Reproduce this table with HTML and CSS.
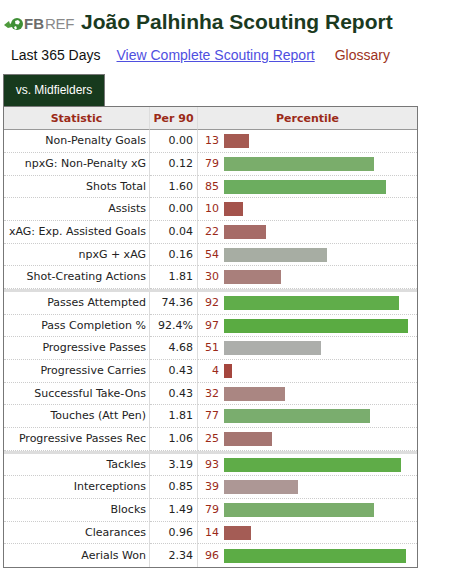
FILE: index.html
```html
<!DOCTYPE html>
<html lang="pt">
<head>
    <meta charset="UTF-8">
    <meta name="viewport" content="width=device-width, initial-scale=1.0">
    <title>João Palhinha Scouting Report</title>
    <link rel="stylesheet" href="styles.css">
</head>
<body>
    <div class="page-header">
        <div class="logo">
            <svg class="logo-mark" width="20" height="16" viewBox="0 0 20 16">
                <path d="M1 9 L6 5 L7 8 L10 6 L9 11 L5 12 Z" fill="#4e9a3c"/>
                <circle cx="14" cy="8" r="6" fill="#3f8f35"/>
                <path d="M12 5 L15 4 L17 6 L15.5 8.5 L12.5 8 Z" fill="#ffffff"/>
                <path d="M11 11 L13 10 L14 12.5 L12 13.5 Z" fill="#ffffff"/>
            </svg>
            <span class="logo-fb">FB</span><span class="logo-ref">REF</span>
        </div>
        <h1>João Palhinha Scouting Report</h1>
    </div>

    <div class="meta">
        <span class="period">Last 365 Days</span>
        <a class="full-link" href="#">View Complete Scouting Report</a>
        <span class="glossary">Glossary</span>
    </div>

    <div class="tabs">
        <div class="tab active">vs. Midfielders</div>
    </div>

    <table class="scout-table">
        <colgroup>
            <col class="col-stat">
            <col class="col-per90">
            <col>
        </colgroup>
        <thead>
            <tr>
                <th>Statistic</th>
                <th>Per 90</th>
                <th>Percentile</th>
            </tr>
        </thead>
        <tbody id="scoutRows"></tbody>
    </table>

    <script>
        // [statistic, per 90, percentile, bar colour]
        const groups = [
            [
                ['Non-Penalty Goals', '0.00', 13, '#a55a52'],
                ['npxG: Non-Penalty xG', '0.12', 79, '#7aad6b'],
                ['Shots Total', '1.60', 85, '#6cad5f'],
                ['Assists', '0.00', 10, '#a4534c'],
                ['xAG: Exp. Assisted Goals', '0.04', 22, '#a66b67'],
                ['npxG + xAG', '0.16', 54, '#a7ada3'],
                ['Shot-Creating Actions', '1.81', 30, '#a97f7b']
            ],
            [
                ['Passes Attempted', '74.36', 92, '#60ad4a'],
                ['Pass Completion %', '92.4%', 97, '#5aab42'],
                ['Progressive Passes', '4.68', 51, '#acaeab'],
                ['Progressive Carries', '0.43', 4, '#a5463e'],
                ['Successful Take-Ons', '0.43', 32, '#aa8682'],
                ['Touches (Att Pen)', '1.81', 77, '#7aad6e'],
                ['Progressive Passes Rec', '1.06', 25, '#a57571']
            ],
            [
                ['Tackles', '3.19', 93, '#5fac48'],
                ['Interceptions', '0.85', 39, '#ad9795'],
                ['Blocks', '1.49', 79, '#7aad6b'],
                ['Clearances', '0.96', 14, '#a45c55'],
                ['Aerials Won', '2.34', 96, '#5cac45']
            ]
        ];

        const tbody = document.getElementById('scoutRows');
        let rowCount = 0;

        groups.forEach((rows, g) => {
            if (g > 0) {
                const spacer = document.createElement('tr');
                spacer.className = 'spacer';
                spacer.innerHTML = '<td colspan="3"></td>';
                tbody.appendChild(spacer);
            }

            rows.forEach((row, i) => {
                const [stat, per90, pct, color] = row;
                const tr = document.createElement('tr');
                // rows average 22.67px: every third one is a pixel shorter
                if (rowCount % 3 === 2) tr.className = 'short';
                if (g === groups.length - 1 && i === rows.length - 1) tr.classList.add('last');
                rowCount++;

                const statTd = document.createElement('td');
                statTd.className = 'stat';
                statTd.textContent = stat;

                const perTd = document.createElement('td');
                perTd.className = 'per90';
                perTd.textContent = per90;

                const pctTd = document.createElement('td');
                pctTd.className = 'percentile';
                const wrap = document.createElement('div');
                wrap.className = 'pct-wrap';
                const num = document.createElement('span');
                num.className = 'pct-num';
                num.textContent = pct;
                const bar = document.createElement('div');
                bar.className = 'pct-bar';
                bar.style.width = (pct * 1.9) + 'px';
                bar.style.backgroundColor = color;
                wrap.appendChild(num);
                wrap.appendChild(bar);
                pctTd.appendChild(wrap);

                tr.appendChild(statTd);
                tr.appendChild(perTd);
                tr.appendChild(pctTd);
                tbody.appendChild(tr);
            });
        });
    </script>
</body>
</html>
```

FILE: styles.css
```css
* {
    margin: 0;
    padding: 0;
    box-sizing: border-box;
}

body {
    font-family: "Liberation Sans", Arial, sans-serif;
    background: #ffffff;
    color: #222222;
    padding: 0 3px;
}

.page-header {
    display: flex;
    align-items: center;
    gap: 7px;
    padding-top: 10px;
    height: 34px;
}

.logo {
    display: flex;
    align-items: center;
    height: 24px;
    padding-top: 3px;
}

.logo-mark {
    margin-right: 1px;
}

.logo-fb {
    font-size: 15px;
    font-weight: bold;
    color: #6b6b6b;
}

.logo-ref {
    font-size: 15px;
    color: #8a8a8a;
    letter-spacing: -0.3px;
    margin-left: 1px;
}

.page-header h1 {
    font-size: 21px;
    line-height: 24px;
    color: #1b3a1f;
}

.meta {
    display: flex;
    align-items: center;
    margin: 13px 0 0 8px;
    font-size: 14px;
    line-height: 16px;
}

.period {
    color: #111111;
}

.full-link {
    margin-left: 16px;
    color: #4f4fdf;
    text-decoration: underline;
}

.glossary {
    margin-left: 20px;
    color: #9d3222;
}

.tabs {
    display: flex;
    margin-top: 11px;
}

.tab {
    width: 102px;
    height: 32px;
    line-height: 31px;
    text-align: center;
    font-size: 12px;
    border: 1px solid #777777;
    border-bottom: none;
}

.tab.active {
    background: #173a1d;
    color: #ffffff;
}

.scout-table {
    width: 415px;
    table-layout: fixed;
    border-collapse: separate;
    border-spacing: 0;
    border: 1px solid #777777;
    font-family: "DejaVu Sans", Verdana, sans-serif;
    font-size: 11px;
}

.col-stat {
    width: 146px;
}

.col-per90 {
    width: 48px;
}

.scout-table th {
    height: 23px;
    background: #ececec;
    color: #9b2a18;
    font-weight: bold;
    text-align: center;
    border-bottom: 1px solid #999999;
    border-right: 1px solid #dddddd;
}

.scout-table td {
    height: 23px;
    padding: 0 3px;
    line-height: 14px;
    border-bottom: 1px dotted #cccccc;
    border-right: 1px solid #dddddd;
    white-space: nowrap;
}

.scout-table tr.short td {
    height: 22px;
}

.scout-table th:last-child,
.scout-table td:last-child {
    border-right: none;
}

.scout-table tr.last td {
    border-bottom: none;
}

.scout-table tr.spacer td {
    height: 3px;
    padding: 0;
    line-height: 0;
    font-size: 0;
    background: #dddddd;
    border: none;
}

.stat {
    text-align: right;
    color: #222222;
}

.scout-table td.per90 {
    text-align: right;
    padding-right: 4px;
    color: #222222;
}

.scout-table td.percentile {
    padding: 0;
}

.pct-wrap {
    display: flex;
    align-items: center;
    gap: 5px;
}

.pct-num {
    width: 21px;
    text-align: right;
    color: #9b2a18;
}

.pct-bar {
    height: 14px;
}
```
